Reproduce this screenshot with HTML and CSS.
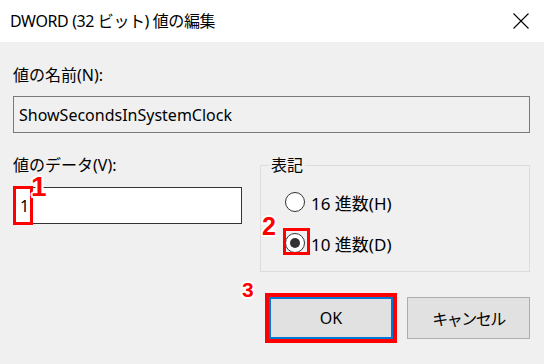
FILE: index.html
```html
<!DOCTYPE html>
<html lang="ja">
<head>
<meta charset="utf-8">
<link rel="stylesheet" href="styles.css">
</head>
<body>
<div class="dialog">
  <div class="titlebar">
    <span class="title">DWORD (32 ビット) 値の編集</span>
    <svg class="close" width="16" height="16" viewBox="0 0 16 16"><path d="M0.5 0.5 L15.5 15.5 M15.5 0.5 L0.5 15.5" stroke="#000" stroke-width="1.1" fill="none"/></svg>
  </div>
  <div class="content">
    <div class="label">値の名前(N):</div>
    <div class="namebox">ShowSecondsInSystemClock</div>
    <div class="row">
      <div class="left">
        <div class="label">値のデータ(V):</div>
        <div class="databox"><span class="dataval">1</span></div>
      </div>
      <fieldset class="group">
        <legend class="legend">表記</legend>
        <div class="options">
          <div class="radio"><span class="circle"></span><span>16 進数(H)</span></div>
          <div class="radio"><span class="circle checked"></span><span>10 進数(D)</span></div>
        </div>
      </fieldset>
    </div>
    <div class="buttons">
      <div class="btn ok">OK</div>
      <div class="btn cancel">キャンセル</div>
    </div>
  </div>
  <div class="mark box1"></div>
  <div class="num n1">1</div>
  <div class="mark box2"></div>
  <div class="num n2">2</div>
  <div class="mark box3"></div>
  <div class="num n3">3</div>
</div>
</body>
</html>
```

FILE: styles.css
```css
html, body {
  margin: 0;
  padding: 0;
}
body {
  width: 544px;
  height: 364px;
  overflow: hidden;
  background: #f0f0f0;
  font-family: "Noto Sans", "Noto Sans CJK JP", sans-serif;
  font-size: 16px;
  color: #000;
}
.dialog {
  position: relative;
  width: 544px;
  height: 364px;
}
.titlebar {
  height: 42px;
  background: #fff;
  display: flex;
  align-items: center;
  justify-content: space-between;
  padding: 0 15px 0 10px;
}
.title {
  font-size: 16px;
  line-height: 20px;
  letter-spacing: -0.4px;
}
.close {
  display: block;
}
.content {
  padding: 23px 14px 0 13px;
}
.label {
  line-height: 20px;
  height: 20px;
}
.namebox {
  margin-top: 11px;
  height: 37px;
  box-sizing: border-box;
  border: 1px solid #7a7a7a;
  display: flex;
  align-items: center;
  padding-left: 5px;
}
.row {
  margin-top: 22px;
  display: flex;
  justify-content: space-between;
}
.left {
  width: 229px;
}
.databox {
  margin-top: 12px;
  height: 37px;
  box-sizing: border-box;
  border: 1px solid #333;
  background: #fff;
  display: flex;
  align-items: center;
  padding-left: 6px;
}
.group {
  margin: 0;
  width: 270px;
  height: 117px;
  box-sizing: border-box;
  border: 1px solid #dcdcdc;
  padding: 0;
}
.legend {
  margin-left: 8px;
  padding: 0 2px;
  line-height: 20px;
}
.options {
  padding: 17px 0 0 24px;
  display: flex;
  flex-direction: column;
  gap: 21px;
}
.radio {
  display: flex;
  align-items: center;
  gap: 6px;
  height: 20px;
  font-size: 17px;
}
.circle {
  width: 20px;
  height: 20px;
  box-sizing: border-box;
  border: 1px solid #333;
  border-radius: 50%;
  background: #fff;
  display: flex;
  align-items: center;
  justify-content: center;
}
.circle.checked::after {
  content: "";
  width: 10px;
  height: 10px;
  border-radius: 50%;
  background: #333;
}
.buttons {
  margin-top: 25px;
  display: flex;
  justify-content: flex-end;
  gap: 14px;
}
.btn {
  width: 123px;
  height: 42px;
  box-sizing: border-box;
  border: 1px solid #adadad;
  background: #e1e1e1;
  display: flex;
  align-items: center;
  justify-content: center;
}
.btn.ok {
  width: 124px;
  border: 2px solid #0078d7;
}
.btn.cancel {
  letter-spacing: -1.5px;
}
.mark {
  position: absolute;
  border: 3px solid #ff0000;
  box-sizing: border-box;
}
.box1 { left: 13px; top: 186px; width: 20px; height: 39px; }
.box2 { left: 283px; top: 228px; width: 27px; height: 27px; }
.box3 { left: 265px; top: 293px; width: 132px; height: 50px; border-width: 4px; }
.num {
  position: absolute;
  font-family: "Liberation Sans", sans-serif;
  font-weight: bold;
  color: #ff0000;
  text-shadow: 2px 0 0 #fff, -2px 0 0 #fff, 0 2px 0 #fff, 0 -2px 0 #fff, 1.5px 1.5px 0 #fff, -1.5px -1.5px 0 #fff, 1.5px -1.5px 0 #fff, -1.5px 1.5px 0 #fff;
}
.n1 { left: 31px; top: 177px; font-size: 28px; line-height: 20px; }
.n2 { left: 262px; top: 217px; font-size: 25px; line-height: 18px; }
.n3 { left: 242px; top: 282px; font-size: 21px; line-height: 15px; }
```
